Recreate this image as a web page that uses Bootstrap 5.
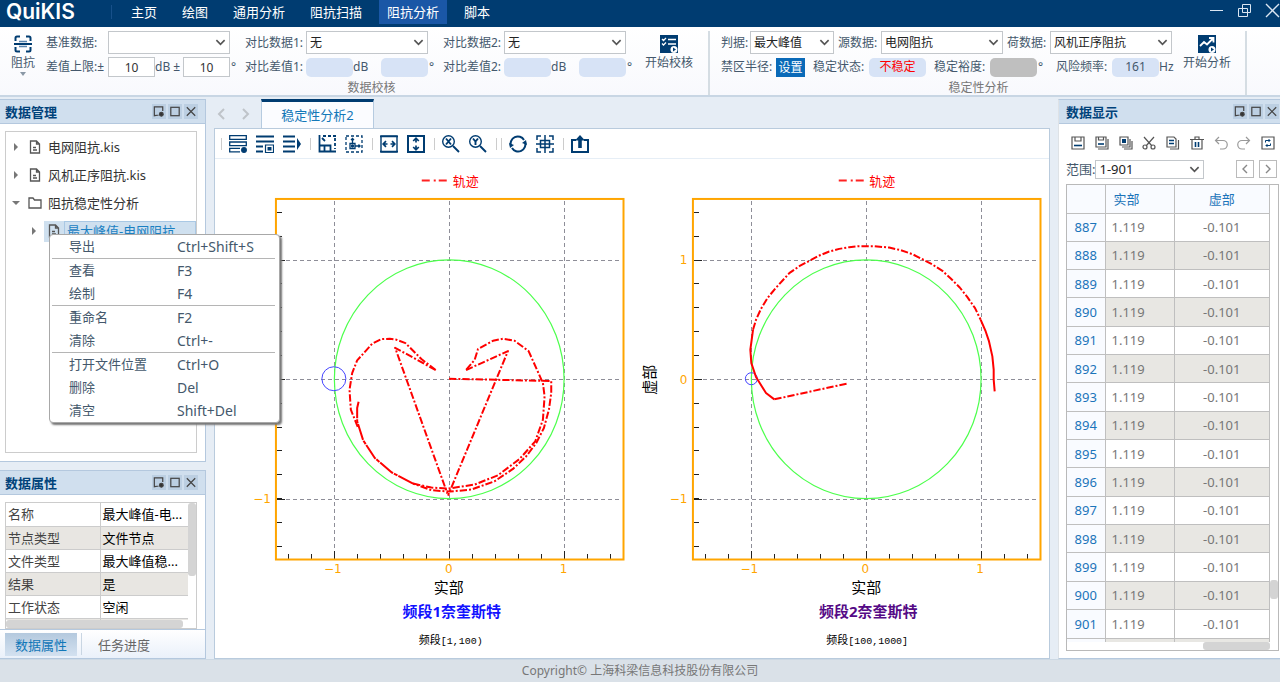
<!DOCTYPE html>
<html lang="zh-CN">
<head>
<meta charset="utf-8">
<meta name="viewport" content="width=device-width, initial-scale=1">
<title>QuiKIS</title>
<link href="https://cdn.jsdelivr.net/npm/bootstrap@5.3.0/dist/css/bootstrap.min.css" rel="stylesheet">
<style>
:root{--navy:#003c71;--ink:#44586c;--line:#b4c8de;--pane:#e6edf5}
body{font-family:"Noto Sans","Noto Sans CJK SC",sans-serif;font-size:13px;line-height:20px;background:var(--pane);color:#333;min-height:100vh}
button{padding:0;border:0;background:none;color:inherit;line-height:inherit}
svg{display:block}
.ico{width:18px;height:18px;fill:none;stroke:var(--navy);stroke-width:2}
.titlebar{background:var(--navy);height:27px;color:#fff}
.logo{font:600 21px/24px Inter,sans-serif;width:105px;padding-left:6px}
.tick-sep{width:1px;height:14px;background:#17508a;margin:5px 11px 0 6px}
.titlebar .nav-link{color:#fff;font-size:13px;line-height:24px;padding:0 8px}
.titlebar .nav{gap:9px}
.titlebar .nav-link.active{background:#1a57a6}
.winbtns{gap:13px;padding-top:2px}
.winbtns svg{width:15px;height:17px;stroke:#dbe6f2;fill:none}
.ribbon{background:linear-gradient(#fff,#f8f9fd);height:70px;border-bottom:2px solid #c8d6e4;font-size:12px;color:var(--ink);white-space:nowrap;line-height:18px;padding-top:4px}
.rgroup{border-right:2px solid #d5dde3;height:64px}
.rgroup .caption{color:#777;line-height:14px;margin-top:4px}
.field-row{height:23px}
.field-row+.field-row{height:20px;margin-top:3px}
.lbl{width:61px}
.lbl.first{width:62px}
.ribbon .form-select,.range .form-select{font-size:12px;border:1px solid #c3c7cb;border-radius:0;color:#222;line-height:18px;height:23px;padding:1px 16px 1px 3px;background-position:right 3px center;background-size:11px;--bs-form-select-bg-img:url("data:image/svg+xml,%3Csvg xmlns='http://www.w3.org/2000/svg' viewBox='0 0 12 12'%3E%3Cpath d='M1.5 3.5 6 8l4.500-4.500' fill='none' stroke='%23555' stroke-width='1.800'/%3E%3C/svg%3E")}
.w-l{width:122px}.w-m{width:84px}
.num{width:47px;height:20px;border:1px solid #c3c7cb;font-size:12px;text-align:center;color:#333;padding:0;background:#fff}
.unit{width:28px}
.deg{width:15px;padding-left:1px}
.pill{width:47px;height:19px;border-radius:5px;background:#d7e3f6;text-align:center;display:block;border:0;padding:0;font-size:12px;color:var(--ink)}
.pill.bad{width:57px;color:#f00}
.pill.off{background:#bfbfbf}
.setbtn{background:#0a6ab8;color:#fff;width:29px;height:19px;line-height:19px}
.bigbtn{line-height:18px}
.bigbtn svg{margin:0 auto 1px}
.workspace{flex:1;gap:8px;padding-top:2px}
.left-col{width:206px;gap:8px}
.right-col{width:222px}
.pane{background:#fff;border:1px solid var(--line);border-left:0}
.pane-h{background:#d0dfee;border-bottom:1px solid var(--line);height:24px;padding:0 7px 0 5px;color:#00427a;font-weight:700;line-height:22px}
.right-col .pane-h{padding:0 1px 0 7px}
.pane-h .d-flex{gap:2px}
.pane-h button{width:14px;height:15px;background:#bccfe2}
.pane-h svg{width:14px;height:15px;fill:none;stroke:#444;stroke-width:1.3}
.tree{border:1px solid #ccc;margin:7px 8px 8px 5px;list-style:none;padding:1px 0 0;flex:1;min-height:0;color:#333}
.tree li{height:28px;padding-left:7px;margin-bottom:0}
.tree svg{width:14px;height:14px;fill:none;stroke:#555;stroke-width:1.3}
.tree .arw{width:6px;fill:#777;stroke:none;margin-right:9px}
.tree .open{margin-right:8px;width:8px;margin-left:-1px}
.tree li svg+svg{margin-right:6px}
.tree li.sel{padding-left:25px}
.tree .arw.sub{margin-right:7px}
.tree .selbox{background:#cfe0ef;height:21px;flex:1;padding-left:3px;color:#1b80c2}
.tree .selbox span{border:1px solid #a9c8e4;flex:1;line-height:19px;padding-left:2px}
.tree .selbox svg{margin-right:3px}
.ctx{position:absolute;left:49px;top:135px;width:231px;background:#fff;border:1px solid #a8a8a8;border-radius:4px;box-shadow:2px 2px 2px #777;color:var(--ink);z-index:5;list-style:none;padding:0;margin:0}
.ctx button{display:flex;width:100%;height:23px;line-height:23px;padding-left:19px;text-align:left;font-size:14px}
.ctx button span{width:108px;font-size:13px}
.ctx .rule{height:1px;background:#b5b5b5;margin:0 4px 0 2px}
.props{margin:7px 8px 0 5px;border:1px solid #ccc;height:127px;overflow:hidden}
.props table{width:100%;border-collapse:collapse;table-layout:fixed}
.props th,.props td{height:23px;line-height:22px;border-bottom:1px solid #ccc;padding:0 2px;white-space:nowrap;overflow:hidden}
.props th{width:94px;font-weight:400;border-right:1px solid #ccc;color:#444}
.props td{color:#000}
.props tr:nth-child(even)>*{background:#e8e6e2}
.vbar{width:8px;background:#fff}
.thumb{background:#d4d4d4;border-radius:3px}
.btabs{height:29px;background:linear-gradient(#fff,#eaf1fa);border:1px solid var(--line);border-left:0;border-top:0;padding:3px 0 3px 5px;color:#666}
.btabs button{width:84px;line-height:22px;height:23px}
.btabs button.on{width:72px;background:linear-gradient(#b4c9de,#d3e1f0);color:#1177b8;margin-right:4px}
.btabs .vr{opacity:1;background:#c9d6e3}
.tabstrip{height:29px}
.tabstrip .arrows{width:47px;padding-left:2px;gap:10px}
.tabstrip .arrows svg{width:13px;height:14px;fill:none;stroke:#bfc4c9;stroke-width:2}
.doctab{border:1px solid #b6cbe0;border-top:3px solid var(--navy);border-bottom:0;background:#fbfcff;color:#1478b8;width:113px;line-height:24px;height:29px}
.doc{background:#fff;border:1px solid #b9cbdd;flex:1;min-height:0}
.tools{height:30px;border-bottom:1px solid #e6eef6;padding-left:6px}
.tools button{margin-right:9px}
.tools i{width:1px;height:12px;background:#ccc;margin-right:7px}
.tools i.close-by{margin-right:4px}
.plots{width:100%;height:auto}
.dtools{padding:12px 5px 0 12px;height:35px}
.dtools svg{width:14px;height:14px;fill:none;stroke:#555;stroke-width:1.2}
.dtools .b{stroke:var(--navy);stroke-width:1.6}
.dtools .g{stroke:#999}
.range{padding:0 0 0 7px;color:var(--ink)}
.range .form-select{width:109px;height:19px;line-height:15px;padding:0 16px 0 3px;font-size:13px;margin-right:32px}
.range button{width:18px;height:18px;border:1px solid #bbb;margin-right:5px}
.range button:last-child{margin-right:0}
.range button svg{width:16px;height:16px;fill:none;stroke:#888;stroke-width:1.4}
.sheet{border:1px solid #b9b9b9;margin:5px 1px 7px 7px;flex:1;min-height:0}
.sheet table{width:100%;height:100%;border-collapse:collapse;table-layout:fixed}
.sheet th,.sheet td{border-right:1px solid #bfbfbf;border-bottom:1px solid #bfbfbf;font-weight:400;color:#777;padding:0;line-height:20px}
.sheet th{color:#1b74ba;background:#f9fbff}
.sheet tr:first-child{height:28px}
.sheet tbody tr:nth-child(even) td{background:#e8e7e3}
.sheet td:nth-child(2){padding-left:6px}
.sheet thead th:nth-child(2){padding-left:8px}
.sheet tr.part>*{height:4px;line-height:0;border-bottom:0}
.foot{background:#dae1e8;height:23px;border-top:1px solid #cdd9e4;color:#777;font-size:12px;line-height:22px}
.plots text{font-family:"Noto Sans","Noto Sans CJK SC",sans-serif}
.plots .ax text{font-family:"DejaVu Sans",sans-serif;font-size:12px;fill:#ffa500}
.plots .rng{font-family:"Liberation Mono","Noto Sans CJK SC",monospace;font-size:10px}
.plots .rng tspan{font-size:11px}
</style>
</head>
<body class="d-flex flex-column">
<svg width="0" height="0" class="position-absolute" aria-hidden="true">
<symbol id="doc" viewBox="0 0 14 14"><path d="M2.500 1h6l3 3v9h-9zM8.500 1v3h3M5 7.500h3M5 10h4"/></symbol>
<symbol id="dock" viewBox="0 0 15 15"><path d="M7 11.500H5.500L2.500 12V2.500h9V7"/><circle cx="10" cy="10.500" r="2" fill="#333"/></symbol>
<symbol id="maxi" viewBox="0 0 15 15"><rect x="3" y="3" width="9" height="9"/></symbol>
<symbol id="cls" viewBox="0 0 15 15"><path d="m3 3 9 9m0-9-9 9"/></symbol>
</svg>

<header class="titlebar d-flex align-items-start">
  <div class="logo">QuiKIS</div><span class="tick-sep"></span>
  <nav class="nav">
    <a class="nav-link" href="#">主页</a><a class="nav-link" href="#">绘图</a><a class="nav-link" href="#">通用分析</a><a class="nav-link" href="#">阻抗扫描</a><a class="nav-link active" href="#">阻抗分析</a><a class="nav-link" href="#">脚本</a>
  </nav>
  <div class="winbtns d-flex ms-auto">
    <button aria-label="最小化"><svg viewBox="0 0 15 17"><path d="M1 8.500h13"/></svg></button>
    <button aria-label="还原"><svg viewBox="0 0 15 17"><path d="M5.500 2.500h8v8h-8zM10.500 10.500v4h-9v-8h9v4"/></svg></button>
    <button aria-label="关闭"><svg viewBox="0 0 15 17"><path d="m1 2 13 13m0-13L1 15" stroke-width="1.400"/></svg></button>
  </div>
</header>

<section class="ribbon d-flex">
  <div class="rgroup d-flex" style="width:710px">
    <button class="bigbtn align-self-start text-center pt-1" style="width:46px"><svg class="ico" viewBox="0 0 18 18"><path d="M1.500 6V3q0-1.500 1.500-1.500h3M12 1.500h3q1.500 0 1.500 1.500v3M16.500 12v3q0 1.500-1.500 1.500h-3M6 16.500H3Q1.500 16.500 1.500 15v-3M0 9h18"/><path d="M5 6.500h8M5 11.500h8" stroke="#5a85ad" stroke-width="1.500"/></svg>阻抗<svg width="8" height="4"><path d="M1 0h6L4 4z" fill="#8a98a6"/></svg></button>
    <div>
      <div class="d-flex">
        <div>
          <div class="field-row d-flex align-items-center"><label class="lbl first" for="s1">基准数据:</label><select id="s1" class="form-select w-l"><option></option></select><span class="deg"></span></div>
          <div class="field-row d-flex align-items-center"><label class="lbl first" for="n1">差值上限:±</label><input id="n1" class="num" value="10"><label class="unit" for="n2">dB ±</label><input id="n2" class="num" value="10"><span class="deg">°</span></div>
        </div>
        <div>
          <div class="field-row d-flex align-items-center"><label class="lbl" for="s2">对比数据1:</label><select id="s2" class="form-select w-l"><option>无</option></select><span class="deg"></span></div>
          <div class="field-row d-flex align-items-center"><span class="lbl">对比差值1:</span><span class="pill"></span><span class="unit">dB</span><span class="pill"></span><span class="deg">°</span></div>
        </div>
        <div>
          <div class="field-row d-flex align-items-center"><label class="lbl" for="s3">对比数据2:</label><select id="s3" class="form-select w-l"><option>无</option></select><span class="deg"></span></div>
          <div class="field-row d-flex align-items-center"><span class="lbl">对比差值2:</span><span class="pill"></span><span class="unit">dB</span><span class="pill"></span><span class="deg">°</span></div>
        </div>
        <button class="bigbtn align-self-start text-center pt-1" style="width:56px"><svg class="ico" viewBox="0 0 18 18"><path d="M0 0h18v18H0z" fill="#003c71" stroke="none"/><path d="m2 4 1.500 1.500L6 3M2 8.500 3.500 10 6 7.500M8 4.500h8M8 9h8" stroke="#fff" stroke-width="1.300"/><circle cx="14" cy="14.500" r="3.500" fill="#fff" stroke="none"/><path d="m13 12.500 3 2-3 2z" fill="#003c71" stroke="none"/></svg>开始校核</button>
      </div>
      <div class="caption text-center">数据校核</div>
    </div>
  </div>
  <div class="rgroup ps-2 d-flex" style="width:537px">
    <div class="ps-1">
      <div class="d-flex" style="margin-left:-1px">
        <div style="width:454px" class="me-1">
          <div class="field-row d-flex align-items-center"><label style="width:29px" for="s4">判据:</label><select id="s4" class="form-select w-m"><option>最大峰值</option></select><label style="width:47px" class="ps-1" for="s5">源数据:</label><select id="s5" class="form-select w-l"><option>电网阻抗</option></select><label style="width:47px" class="ps-1" for="s6">荷数据:</label><select id="s6" class="form-select w-l"><option>风机正序阻抗</option></select></div>
          <div class="field-row d-flex align-items-center"><span style="width:55px">禁区半径:</span><button class="setbtn">设置</button><span style="width:64px" class="ps-2">稳定状态:</span><span class="pill bad">不稳定</span><span style="width:64px" class="ps-2">稳定裕度:</span><span class="pill off"></span><span class="deg">°</span><span style="width:60px" class="ps-1">风险频率:</span><span class="pill">161</span><span>Hz</span></div>
        </div>
        <button class="bigbtn align-self-start text-center pt-1" style="width:56px"><svg class="ico" viewBox="0 0 18 18"><path d="M0 0h18v18H0z" fill="#003c71" stroke="none"/><path d="m2 11 4-4 3 2.500 6-6M11 3h4.500v4.500" stroke="#fff" stroke-width="1.800"/><circle cx="14" cy="14.500" r="3.500" fill="#fff" stroke="none"/><path d="m13 12.500 3 2-3 2z" fill="#003c71" stroke="none"/></svg>开始分析</button>
      </div>
      <div class="caption text-center">稳定性分析</div>
    </div>
  </div>
</section>

<main class="workspace d-flex">
  <aside class="left-col d-flex flex-column flex-shrink-0 position-relative">
    <section class="pane d-flex flex-column flex-grow-1">
      <div class="pane-h d-flex justify-content-between align-items-center">数据管理
        <div class="d-flex"><button aria-label="停靠"><svg><use href="#dock"/></svg></button><button aria-label="最大化"><svg><use href="#maxi"/></svg></button><button aria-label="关闭"><svg><use href="#cls"/></svg></button></div></div>
      <ul class="tree">
        <li class="d-flex align-items-center"><svg class="arw" viewBox="0 0 6 14"><path d="m1 3 4 4-4 4z"/></svg><svg><use href="#doc"/></svg>电网阻抗.kis</li>
        <li class="d-flex align-items-center"><svg class="arw" viewBox="0 0 6 14"><path d="m1 3 4 4-4 4z"/></svg><svg><use href="#doc"/></svg>风机正序阻抗.kis</li>
        <li class="d-flex align-items-center"><svg class="arw open" viewBox="0 0 8 14"><path d="M0 5h8L4 9z"/></svg><svg viewBox="0 0 14 14"><path d="M1 12V2h4l1.500 2H13v8z"/></svg>阻抗稳定性分析</li>
        <li class="d-flex align-items-center sel"><svg class="arw sub" viewBox="0 0 6 14"><path d="m1 3 4 4-4 4z"/></svg><div class="selbox d-flex align-items-center"><svg><use href="#doc"/></svg><span>最大峰值-电网阻抗</span></div></li>
      </ul>
    </section>
    <ul class="ctx">
      <li><button><span>导出</span>Ctrl+Shift+S</button></li><li class="rule"></li>
      <li><button><span>查看</span>F3</button></li>
      <li><button><span>绘制</span>F4</button></li><li class="rule"></li>
      <li><button><span>重命名</span>F2</button></li>
      <li><button><span>清除</span>Ctrl+-</button></li><li class="rule"></li>
      <li><button><span>打开文件位置</span>Ctrl+O</button></li>
      <li><button><span>删除</span>Del</button></li>
      <li><button><span>清空</span>Shift+Del</button></li>
    </ul>
    <section>
      <div class="pane">
        <div class="pane-h d-flex justify-content-between align-items-center">数据属性
          <div class="d-flex"><button aria-label="停靠"><svg><use href="#dock"/></svg></button><button aria-label="最大化"><svg><use href="#maxi"/></svg></button><button aria-label="关闭"><svg><use href="#cls"/></svg></button></div></div>
        <div class="props d-flex flex-column">
          <div class="d-flex flex-grow-1 overflow-hidden">
            <table><tbody>
              <tr><th>名称</th><td>最大峰值-电...</td></tr>
              <tr><th>节点类型</th><td>文件节点</td></tr>
              <tr><th>文件类型</th><td>最大峰值稳...</td></tr>
              <tr><th>结果</th><td>是</td></tr>
              <tr><th>工作状态</th><td>空闲</td></tr>
              <tr><th></th><td></td></tr>
            </tbody></table>
            <div class="vbar flex-shrink-0"><div class="thumb" style="height:73px"></div></div>
          </div>
          <div class="d-flex flex-shrink-0" style="height:8px"><div class="thumb" style="width:93%"></div></div>
        </div>
      </div>
      <div class="btabs d-flex"><button class="on">数据属性</button><span class="vr"></span><button>任务进度</button></div>
    </section>
  </aside>

  <section class="d-flex flex-column flex-grow-1" style="min-width:0">
    <div class="tabstrip d-flex">
      <div class="arrows d-flex align-items-center"><button aria-label="上一个"><svg viewBox="0 0 13 14"><path d="M8 2 3 7l5 5"/></svg></button><button aria-label="下一个"><svg viewBox="0 0 13 14"><path d="m4 2 5 5-5 5"/></svg></button></div>
      <button class="doctab">稳定性分析2</button>
    </div>
    <div class="doc">
      <div class="tools d-flex align-items-center">
        <i></i>
        <button aria-label="添加行"><svg class="ico" viewBox="0 0 18 18" style="stroke-width:1.3"><path d="M.7.7h16.600v3.600H.7zM.7 7h16.600v3.600H.7zM11 16.800H.7v-3.500H11"/><circle cx="15" cy="15" r="2.300" fill="#003c71"/></svg></button>
        <button aria-label="图例"><svg class="ico" viewBox="0 0 18 18"><path d="M0 1.500h18M0 6.500h18M0 11.500h7M0 16.500h7"/><path d="M9.500 10h8v7.500h-8z" stroke-width="1.200"/><path d="M11.500 12h4v3.500h-4z" fill="#003c71" stroke="none"/></svg></button>
        <button aria-label="展开"><svg class="ico" viewBox="0 0 18 18"><path d="M0 1.500h12M0 6.500h12M0 11.500h12M0 16.500h12"/><path d="m14 3 4 6-4 6z" fill="#003c71" stroke="none"/></svg></button>
        <i></i>
        <button aria-label="坐标轴"><svg class="ico" viewBox="0 0 18 18" style="stroke-width:1.800"><path d="M1.500 0v16.500H18M1 10.500h11.500V17M6.500 16v-5M4 3l3 3"/><path d="M5 1h13M17 3v11" stroke-dasharray="3 2"/></svg></button>
        <button aria-label="原点"><svg class="ico" viewBox="0 0 18 18" style="stroke-width:1.300"><rect x="1" y="1" width="16" height="16" stroke-dasharray="3 2"/><path d="M7.500 3.500V8M6 5l1.500-1.500L9 5M10 11h5M13.500 9.500 15 11l-1.500 1.500"/><path d="M5 8.500h5v5H5z"/><circle cx="7.500" cy="11" r="1" fill="#003c71"/></svg></button>
        <i></i>
        <button aria-label="水平缩放"><svg class="ico" viewBox="0 0 18 18"><path d="M1 1h16v16H1z" stroke-width="1.400"/><path d="M0 1.500h18M0 16.500h18M7.500 9H3m3-2.800L3.200 9 6 11.800M10.500 9H15m-3-2.800L14.800 9 12 11.800" stroke-width="1.700"/></svg></button>
        <button aria-label="垂直缩放"><svg class="ico" viewBox="0 0 18 18"><path d="M1 1h16v16H1z"/><path d="M9 7.500V3M6.200 6 9 3.200 11.800 6M9 10.500V15m-2.800-3L9 14.800l2.800-2.800" stroke-width="1.700"/></svg></button>
        <i></i>
        <button aria-label="X缩放"><svg class="ico" viewBox="0 0 18 18" style="stroke-width:1.400"><circle cx="6.500" cy="6.500" r="5.800"/><path d="m4 3.500 5 6m0-6-5 6M11 11l6 6" stroke-width="1.900"/></svg></button>
        <button aria-label="Y缩放"><svg class="ico" viewBox="0 0 18 18" style="stroke-width:1.400"><circle cx="6.500" cy="6.500" r="5.800"/><path d="m4 3.500 2.500 3 2.500-3M6.500 6.500V10M11 11l6 6" stroke-width="1.900"/></svg></button>
        <i class="close-by"></i><i></i>
        <button aria-label="刷新"><svg class="ico" viewBox="0 0 18 18"><path d="M2 11A7.200 7.200 0 0 1 15 5M16 7A7.200 7.200 0 0 1 3 13"/><path d="m0 8 1 5 4-3zM18 10l-1-5-4 3z" fill="#003c71" stroke="none"/></svg></button>
        <button aria-label="十字光标"><svg class="ico" viewBox="0 0 18 18" style="stroke-width:1.500"><path d="M1 5V1h4M13 1h4v4M17 13v4h-4M5 17H1v-4M9 0v18M0 9h18M4.500 5.500h9v7h-9z"/></svg></button>
        <i></i>
        <button aria-label="导出"><svg class="ico" viewBox="0 0 18 18"><path d="M5 5H1v12h16V5h-4"/><path d="M9 0 4 5.500h3.200V13h3.600V5.500H14z" fill="#003c71" stroke="none"/></svg></button>
      </div>
      <svg class="plots" viewBox="215 159 835 497" role="img" aria-label="奈奎斯特图">
        <defs>
          <g id="frame" fill="none">
            <g stroke="#8e8e98" stroke-dasharray="4 3" shape-rendering="crispEdges"><path d="M334.500 201v350M449.500 201v350M564.500 201v350M286 260.500h336M286 379.500h336M286 499.500h336"/></g>
            <g stroke="#222" shape-rendering="crispEdges"><path d="M279.500 212v340" stroke-width="5" stroke-dasharray="1 22.870"/><path d="M288 556.500h330" stroke-width="5" stroke-dasharray="1 22.050"/><path d="M277 260.500h8M277 379.500h8M277 499.500h8M334.500 551v8M449.500 551v8M564.500 551v8"/></g>
            <ellipse cx="449.500" cy="379.500" rx="115" ry="119.500" stroke="#4cff4c" stroke-width="1.200"/>
            <rect x="276" y="199" width="348" height="361" stroke="#ffa500" stroke-width="2"/>
            <path d="M422 180.500h8M434 180.500h2M439 180.500h8" stroke="#f22" stroke-width="2"/>
          </g>
        </defs>
        <use href="#frame"/><use href="#frame" x="417.500"/>
        <g fill="none" stroke="#44f"><circle cx="334" cy="379" r="12"/><circle cx="752" cy="379" r="6"/></g>
        <g fill="none" stroke="red" stroke-width="6" stroke-linejoin="round" stroke-dasharray="22 6 6 6">
          <g transform="translate(265 190) scale(.3333)">
            <path d="M553 567 860 574V610L853 660 838 715 815 760 785 800 745 838 690 875 620 900 555 906 500 902 445 882"/>
            <path d="M604 541 730 484 550 918M513 541 391 474 548 912M513 541 470 508 422 460 395 450 375 447 350 448 322 462 277 512 262 550 254 600 258 660 280 715"/>
            <path d="M445 882 500 894 550 897 630 885 700 857 765 808 812 755 835 690 840 620 835 580 792 484 750 453 715 447 685 453 640 478 630 510 604 541"/>
            <path d="M445 882 380 848 330 805 295 752 277 695 277 655 282 633" stroke-dasharray="50 3 12 3"/>
          </g>
          <g transform="translate(640 190) scale(.3333)">
            <path d="M622 582 405 629"/>
            <path d="M405 629 380 610 350 562 336 520 333 480 341 420" stroke-dasharray="none"/>
            <path d="M341 420 350 390 365 357 385 324 408 296 450 250 480 229 510 213 540 197 570 185 600 177 630 172 657 169H705L750 173 785 181 820 193 850 208 880 224 910 243 935 266 962 293 985 322 1008 355 1025 390"/>
            <path d="M1025 390 1040 425 1050 455 1060 500 1064 540V570L1067 605" stroke-dasharray="none"/>
          </g>
        </g>
        <g class="ax" text-anchor="middle">
          <text x="333" y="574">−1</text><text x="449" y="574">0</text><text x="564" y="574">1</text>
          <text x="750" y="574">−1</text><text x="866" y="574">0</text><text x="981" y="574">1</text>
        </g>
        <g class="ax" text-anchor="end"><text x="271" y="503">−1</text><text x="688" y="264">1</text><text x="688" y="384">0</text><text x="688" y="503">−1</text></g>
        <g text-anchor="middle">
          <text x="466" y="186" fill="red" font-size="13">轨迹</text><text x="883" y="186" fill="red" font-size="13">轨迹</text>
          <text x="449" y="594" font-size="15">实部</text><text x="867" y="594" font-size="15">实部</text>
          <text transform="translate(656 380) rotate(-90)" font-size="15">虚部</text>
          <text x="452" y="618" font-size="15" font-weight="700" fill="#1212ff">频段1奈奎斯特</text>
          <text x="869" y="618" font-size="15" font-weight="700" fill="#550a86">频段2奈奎斯特</text>
          <text x="451" y="645" class="rng"><tspan>频段</tspan>[1,100)</text><text x="868" y="645" class="rng"><tspan>频段</tspan>[100,1000]</text>
        </g>
      </svg>
    </div>
  </section>

  <aside class="right-col d-flex flex-column flex-shrink-0">
    <section class="pane d-flex flex-column flex-grow-1 border-end-0 border-start">
      <div class="pane-h d-flex justify-content-between align-items-center">数据显示
        <div class="d-flex"><button aria-label="停靠"><svg><use href="#dock"/></svg></button><button aria-label="最大化"><svg><use href="#maxi"/></svg></button><button aria-label="关闭"><svg><use href="#cls"/></svg></button></div></div>
      <div class="dtools d-flex justify-content-between align-items-start">
        <button aria-label="保存"><svg viewBox="0 0 14 14"><path d="M1 1h12v12H1zM4 1v4h6V1"/><path class="b" d="M3 9.500h8"/></svg></button>
        <button aria-label="另存为"><svg viewBox="0 0 14 14"><path d="M1 1h10v10H1zM3.500 1v3h5V1M13 3v10H3"/><path class="b" d="M3 8h6"/></svg></button>
        <button aria-label="全部保存"><svg viewBox="0 0 14 14"><path d="M1 1h8v8H1zM11 3v8H3M13 5v8H5"/><path d="M3 3h4v4H3z" fill="#003c71" stroke="none"/></svg></button>
        <button aria-label="剪切"><svg viewBox="0 0 14 14"><path d="m2 1 8 9M12 1l-8 9"/><circle cx="3" cy="11" r="2"/><circle cx="11" cy="11" r="2"/></svg></button>
        <button aria-label="复制"><svg viewBox="0 0 14 14"><path d="M1 1h7l2 2v8H1zM12.500 4v9H4"/><path class="b" d="M3 4.500h5M3 7.500h5"/></svg></button>
        <button aria-label="删除"><svg viewBox="0 0 14 14"><path d="M0 3.500h14M5 3V1h4v2M2 4v9h10V4"/><path class="b" d="M5.500 6v5M8.500 6v5"/></svg></button>
        <button aria-label="撤销"><svg class="g" viewBox="0 0 14 14"><path d="M5 1 1.500 4.500 5 8M2 4.500h7a4 4 0 0 1 0 8.500H6"/></svg></button>
        <button aria-label="重做"><svg class="g" viewBox="0 0 14 14"><path d="m9 1 3.500 3.500L9 8M12 4.500H5A4 4 0 0 0 5 13h3"/></svg></button>
        <button aria-label="刷新"><svg viewBox="0 0 14 14"><path d="M1 1h12v12H1z"/><path class="b" d="M4.500 6.500v-2H9M9.500 7.500v2H5M7.500 3 9 4.500 7.500 6M6.500 8 5 9.500 6.500 11" style="stroke-width:1"/></svg></button>
      </div>
      <div class="range d-flex align-items-center"><label for="rg">范围:</label><select id="rg" class="form-select"><option>1-901</option></select><button aria-label="上一页"><svg viewBox="0 0 16 16"><path d="M10 4 6 8l4 4"/></svg></button><button aria-label="下一页"><svg viewBox="0 0 16 16"><path d="m6 4 4 4-4 4"/></svg></button></div>
      <div class="sheet d-flex flex-column">
        <div class="d-flex flex-grow-1">
          <table>
            <colgroup><col style="width:38px"><col style="width:69px"><col></colgroup>
            <thead><tr><th></th><th class="text-start">实部</th><th class="text-center">虚部</th></tr></thead>
            <tbody id="rows"></tbody>
          </table>
          <div class="vbar flex-shrink-0 d-flex flex-column justify-content-end"><div class="thumb" style="height:19px;margin-bottom:43px"></div></div>
        </div>
        <div class="d-flex justify-content-end" style="height:8px"><div class="thumb" style="width:67px"></div><div class="vbar"></div></div>
      </div>
    </section>
  </aside>
</main>
<footer class="foot text-center">Copyright© 上海科梁信息科技股份有限公司</footer>

<script>
let html = '';
for (let n = 887; n <= 901; n++) html += `<tr><th class="text-center">${n}</th><td>1.119</td><td class="text-center">-0.101</td></tr>`;
document.getElementById('rows').innerHTML = html + '<tr class="part"><th></th><td></td><td></td></tr>';
</script>
<script src="https://cdn.jsdelivr.net/npm/bootstrap@5.3.0/dist/js/bootstrap.bundle.min.js"></script>
</body>
</html>
